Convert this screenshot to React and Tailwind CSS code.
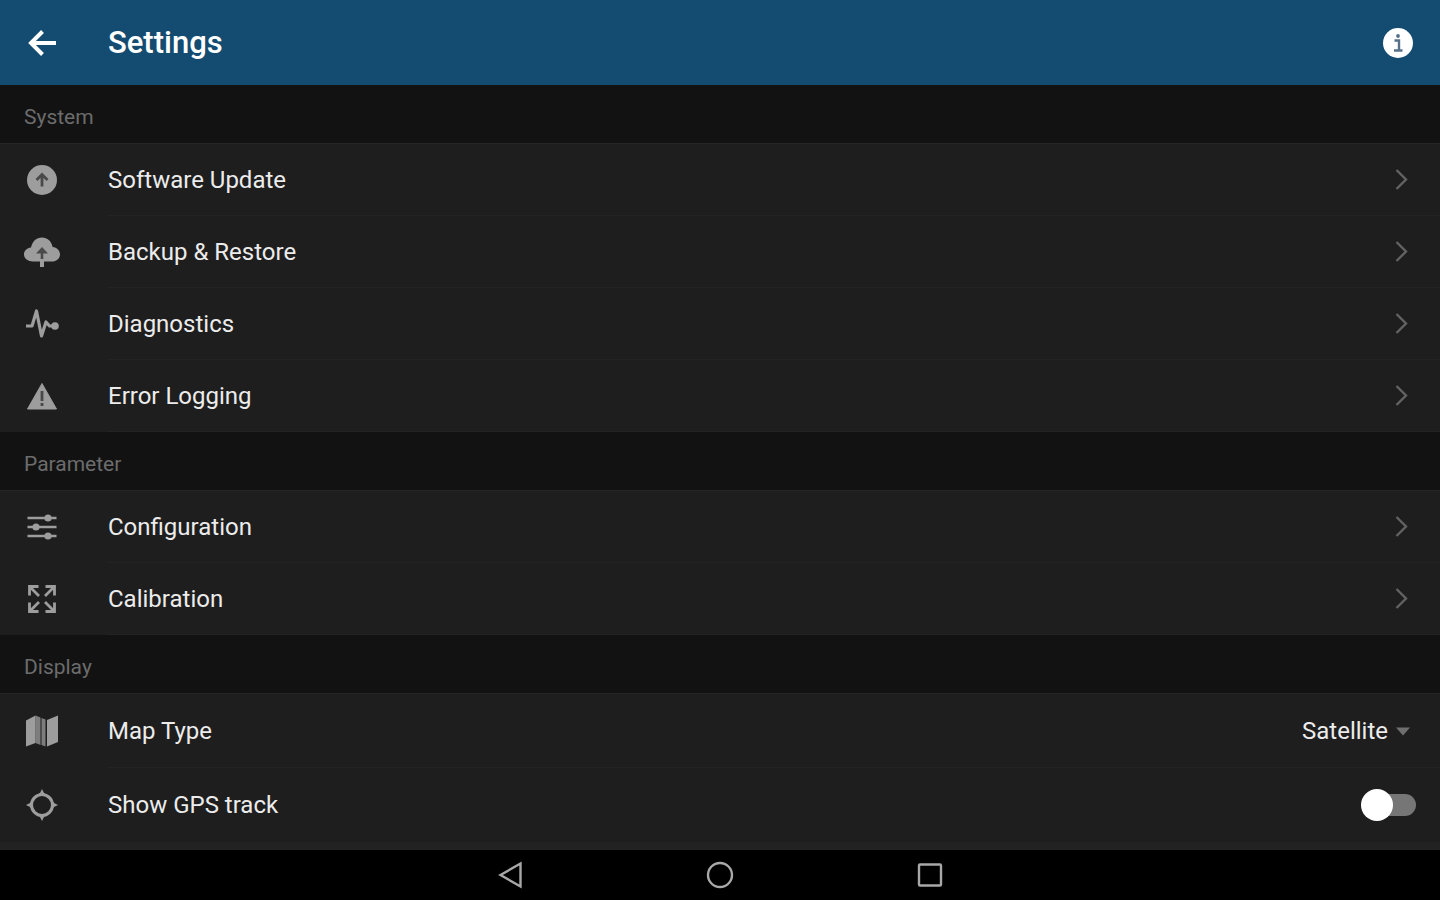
import { useState } from 'react'

const SYSTEM_ROWS = [
  { label: 'Software Update', Icon: UpdateIcon },
  { label: 'Backup & Restore', Icon: CloudIcon },
  { label: 'Diagnostics', Icon: PulseIcon },
  { label: 'Error Logging', Icon: WarningIcon },
]

const PARAMETER_ROWS = [
  { label: 'Configuration', Icon: SlidersIcon },
  { label: 'Calibration', Icon: ExpandIcon },
]

function Svg({ children, className = 'size-9 text-[#9d9d9d]' }) {
  return (
    <svg viewBox="0 0 36 36" className={`shrink-0 ${className}`} fill="none" stroke="none" aria-hidden="true">
      {children}
    </svg>
  )
}

function UpdateIcon() {
  return (
    <Svg>
      <circle cx="18" cy="18" r="15" fill="currentColor" />
      <path d="M18 24.5V13M12.500 18l5.500-5.500 5.500 5.500" stroke="#4a4a4a" strokeWidth="2.800" />
    </Svg>
  )
}

function CloudIcon() {
  return (
    <Svg>
      <path
        d="M9 27.500C4 27.500 0 24.500 0 20.500c0-4 3-6.500 7-7C8.500 7 12.500 3.500 18 3.500c5.300 0 9.300 3.500 10.600 9.400C33 13.500 36 16.500 36 20.200c0 4.200-3.500 7.300-8 7.300z"
        fill="currentColor"
      />
      <path d="M18 28V17" stroke="#4a4a4a" strokeWidth="2.600" />
      <path d="M12 19.500l6-6.500 6 6.500z" fill="#4a4a4a" />
      <path d="M18 25v8" stroke="currentColor" strokeWidth="4" />
    </Svg>
  )
}

function PulseIcon() {
  return (
    <Svg>
      <path
        d="M2 20h6L12.500 5 17.500 30l4.500-14 3.500 4H30"
        stroke="currentColor"
        strokeWidth="3.200"
        strokeLinejoin="round"
      />
      <circle cx="31" cy="20" r="3.800" fill="currentColor" />
    </Svg>
  )
}

function WarningIcon() {
  return (
    <Svg>
      <path d="M18 5.500L32.500 31h-29z" fill="currentColor" stroke="currentColor" strokeLinejoin="round" />
      <path d="M18 13v10M18 25v3" stroke="#484848" strokeWidth="2.800" />
    </Svg>
  )
}

function SlidersIcon() {
  return (
    <Svg>
      <path d="M3.500 9h29M3.500 18h29M3.500 27h29" stroke="currentColor" strokeWidth="2.600" />
      <g fill="currentColor">
        <circle cx="24" cy="9" r="3.600" />
        <circle cx="12" cy="18" r="3.600" />
        <circle cx="24" cy="27" r="3.600" />
      </g>
    </Svg>
  )
}

function ExpandIcon() {
  return (
    <Svg>
      <path
        d="M5.500 14.500v-9h9M5.500 5.500l9.500 9.500M30.500 14.500v-9h-9M30.500 5.500L21 15M5.500 21.500v9h9M5.500 30.500L15 21M30.500 21.500v9h-9M30.500 30.500L21 21"
        stroke="currentColor"
        strokeWidth="2.800"
      />
    </Svg>
  )
}

function MapIcon() {
  return (
    <Svg>
      <path d="M2 7.500l9.500-5v27.500L2 33.500z" fill="currentColor" />
      <path d="M11.500 2.500l5 2v27.500l-5-2zM17.500 5l4 1.500v27L17.500 32z" fill="currentColor" opacity=".75" />
      <path d="M23 7l11-4.500v26.500L23 33.500z" fill="currentColor" />
    </Svg>
  )
}

function LocateIcon() {
  return (
    <Svg>
      <circle cx="18" cy="18" r="10.500" stroke="currentColor" strokeWidth="3" />
      <path
        d="M18 2l2 4 4 3H12l4-3zM18 34l2-4 4-3H12l4 3zM2 18l4-2 3-4v12l-3-4zM34 18l-4-2-3-4v12l3-4z"
        fill="currentColor"
      />
    </Svg>
  )
}

function Section({ title, children }) {
  return (
    <section>
      <h2 className="bg-[#121212] px-6 pb-3 pt-[18px] text-[21px] leading-7 text-[#6c6c6c]">{title}</h2>
      <div className="border-t border-[#252525]">{children}</div>
    </section>
  )
}

function LinkRow({ label, Icon }) {
  return (
    <a href="#" className="flex h-18 items-center pl-6">
      <Icon />
      <span className="ml-12 flex h-full flex-1 items-center justify-between border-b border-[#232323] pr-6">
        {label}
        <svg viewBox="0 0 30 30" className="size-[30px]" fill="none" stroke="#626262" strokeWidth="2.400" aria-hidden="true">
          <path d="M10.500 5l9.500 9.500-9.500 9.500" />
        </svg>
      </span>
    </a>
  )
}

export default function App() {
  const [mapType, setMapType] = useState('Satellite')
  const [showTrack, setShowTrack] = useState(false)

  return (
    <div className="flex min-h-screen flex-col bg-[#222222] font-[Roboto,sans-serif] text-2xl text-[#ececec]">
      <header className="flex h-[85px] items-center bg-[#144b70] px-6 text-white">
        <button aria-label="Back">
          <Svg className="size-9">
            <path d="M32 18H7.500M18.500 6.500L7 18l11.500 11.500" stroke="currentColor" strokeWidth="4" />
          </Svg>
        </button>
        <h1 className="ml-12 flex-1 text-[31px] font-medium">Settings</h1>
        <button aria-label="Information">
          <Svg className="size-9">
            <circle cx="18" cy="18" r="15" fill="currentColor" />
            <path d="M14.500 15.500H19V25M14 25.500h8.500" stroke="#58718a" strokeWidth="2.400" />
            <circle cx="18" cy="11" r="1.900" fill="#58718a" />
          </Svg>
        </button>
      </header>

      <main className="flex-1">
        <div className="bg-[#1e1e1e]">
          <Section title="System">
            {SYSTEM_ROWS.map((row) => (
              <LinkRow key={row.label} {...row} />
            ))}
          </Section>

          <Section title="Parameter">
            {PARAMETER_ROWS.map((row) => (
              <LinkRow key={row.label} {...row} />
            ))}
          </Section>

          <Section title="Display">
            <div className="flex h-[74px] items-center pl-6">
              <MapIcon />
              <div className="ml-12 flex h-full flex-1 items-center justify-between border-b border-[#232323] pr-6">
                <label htmlFor="map-type">Map Type</label>
                <div className="flex items-center">
                  <select
                    id="map-type"
                    value={mapType}
                    onChange={(e) => setMapType(e.target.value)}
                    className="field-sizing-content appearance-none bg-transparent"
                  >
                    <option>Satellite</option>
                  </select>
                  <svg viewBox="0 0 26 26" className="ml-[2px] size-[26px]" fill="#6f6f6f" aria-hidden="true">
                    <path d="M6 9.500h14l-7 8z" />
                  </svg>
                </div>
              </div>
            </div>

            <label className="flex h-[74px] items-center pl-6 pr-6">
              <LocateIcon />
              <span className="ml-12 flex-1">Show GPS track</span>
              <input
                type="checkbox"
                role="switch"
                checked={showTrack}
                onChange={(e) => setShowTrack(e.target.checked)}
                className="relative h-8 w-[55px] appearance-none before:absolute before:inset-x-0 before:inset-y-[5px] before:left-1 before:rounded-full before:bg-[#767676] after:absolute after:left-0 after:top-0 after:size-8 after:rounded-full after:bg-white checked:before:bg-[#144b70] checked:after:left-6"
              />
            </label>
          </Section>
        </div>
      </main>

      <nav className="flex h-[50px] justify-center bg-black text-[#a8a8a8]">
        <div className="grid w-full max-w-[630px] grid-cols-3">
          <button aria-label="Back" className="flex items-center justify-center">
            <Svg className="size-9">
              <path d="M28.500 6.500v23L8.500 18z" stroke="currentColor" strokeWidth="2.400" />
            </Svg>
          </button>
          <button aria-label="Home" className="flex items-center justify-center">
            <Svg className="size-9">
              <circle cx="18" cy="18" r="12" stroke="currentColor" strokeWidth="2.400" />
            </Svg>
          </button>
          <button aria-label="Recent apps" className="flex items-center justify-center">
            <Svg className="size-9">
              <rect x="7" y="7.500" width="22" height="21" rx="1" stroke="currentColor" strokeWidth="2.400" />
            </Svg>
          </button>
        </div>
      </nav>
    </div>
  )
}
